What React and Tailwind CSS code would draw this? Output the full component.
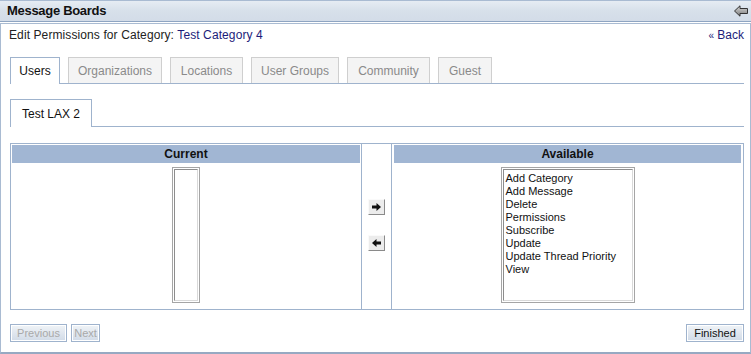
import React from "react";

const tabs = [
  ["Organizations", "w-[94px]"],
  ["Locations", "w-[73px]"],
  ["User Groups", "w-[88px]"],
  ["Community", "w-[83px]"],
  ["Guest", "w-[54px]"],
];
const perms = [
  "Add Category",
  "Add Message",
  "Delete",
  "Permissions",
  "Subscribe",
  "Update",
  "Update Thread Priority",
  "View",
];

function ArrowBtn({ dir }) {
  return (
    <div className="w-[17px] h-[16px] bg-[#ececec] border border-[#fafafa] border-r-[#8a8a8a] border-b-[#8a8a8a] flex items-center justify-center">
      <svg width="9" height="8" viewBox="0 0 9 8">
        {dir === "right" ? (
          <path d="M0 2.5h4.5V0L9 4 4.5 8V5.5H0z" fill="#111" />
        ) : (
          <path d="M9 2.5H4.5V0L0 4l4.5 4V5.5H9z" fill="#111" />
        )}
      </svg>
    </div>
  );
}

function Btn({ children, disabled, w }) {
  return (
    <div className={"h-[18px] border border-[#9fb3cd] bg-white p-px " + w}>
      <div
        className={
          "h-full flex items-center justify-center text-[11px] leading-none bg-gradient-to-b from-[#eef2f6] to-[#d3dce8] " +
          (disabled ? "text-[#a9a9a9]" : "text-[#111]")
        }
      >
        {children}
      </div>
    </div>
  );
}

export default function App() {
  return (
    <div className="w-[751px] h-[354px] bg-white font-['Liberation_Sans',Arial,sans-serif] text-[#222]">
      {/* header */}
      <div className="h-[22px] border-t border-b border-t-[#a9bbd2] border-b-[#8fa5c2] bg-gradient-to-b from-[#e6ecf3] via-[#d7e0ea] to-[#d3dce8] flex items-center justify-between pl-[7px] pr-[3px]">
        <span className="font-bold text-[13px] text-[#111] tracking-[-0.3px]">Message Boards</span>
        <svg width="14" height="12" viewBox="0 0 14 12">
          <defs>
            <linearGradient id="ag" x1="0" y1="0" x2="0" y2="1">
              <stop offset="0" stopColor="#d8d8d8" />
              <stop offset="1" stopColor="#7a7a7a" />
            </linearGradient>
          </defs>
          <path d="M0.5 6L6 0.8V3.5H13.5V8.5H6V11.2Z" fill="url(#ag)" stroke="#333" strokeWidth="1" strokeLinejoin="round" />
        </svg>
      </div>

      {/* frame */}
      <div className="mt-px h-[331px] border border-[#a9bbd2] border-b-2 border-b-[#97a9c2] flex flex-col">
        {/* title row */}
        <div className="h-[18px] flex justify-between pl-[8px] pr-[6px] pt-[4px] text-[12px] leading-[14px]">
          <span className="tracking-[0.1px]">
            Edit Permissions for Category: <span className="text-[#1c1c7a]">Test Category 4</span>
          </span>
          <span className="text-[#1c1c7a]">
            <span className="text-[10px]">«</span> Back
          </span>
        </div>

        {/* main tabs */}
        <div className="mt-[15px] ml-[9px] mr-[6px] h-[27px] border-b border-[#9fb3cd] flex items-end gap-[8px] text-[12px]">
          <div className="w-[50px] h-[27px] -mb-px border border-b-0 border-[#9fb3cd] bg-white flex items-center justify-center text-[#111]">
            Users
          </div>
          {tabs.map(([t, w]) => (
            <div
              key={t}
              className={
                "h-[26px] border border-b-0 border-[#cfcfcf] bg-[#f4f4f4] flex items-center justify-center text-[#8a8a8a] " + w
              }
            >
              {t}
            </div>
          ))}
        </div>

        {/* sub tab */}
        <div className="mt-[15px] ml-[9px] mr-[6px] h-[28px] border-b border-[#9fb3cd] flex items-end text-[12px]">
          <div className="w-[82px] h-[28px] -mb-px border border-b-0 border-[#9fb3cd] bg-white flex items-center justify-center text-[#111]">
            Test LAX 2
          </div>
        </div>

        {/* table */}
        <div className="mt-[16px] ml-[9px] mr-[6px] h-[167px] border border-[#9fb3cd] flex">
          <div className="w-[350px] p-px flex flex-col items-center">
            <div className="w-full h-[18px] bg-[#a1b6d3] flex items-center justify-center font-bold text-[12px] text-[#111]">
              Current
            </div>
            <div className="mt-[4px] w-[28px] h-[136px] border border-[#a5a5a5] p-px bg-white">
              <div className="w-full h-full border border-[#8d8d8d] border-r-[#d9d9d9] border-b-[#d9d9d9]" />
            </div>
          </div>
          <div className="w-[31px] border-l border-r border-[#9fb3cd] flex flex-col items-center justify-center gap-[20px] pb-[3px]">
            <ArrowBtn dir="right" />
            <ArrowBtn dir="left" />
          </div>
          <div className="flex-1 p-[2px] pt-px flex flex-col items-center">
            <div className="w-full h-[18px] bg-[#a1b6d3] flex items-center justify-center font-bold text-[12px] text-[#111]">
              Available
            </div>
            <div className="mt-[4px] w-[134px] h-[136px] border border-[#a5a5a5] p-px bg-white">
              <div className="w-full h-full border border-[#8d8d8d] border-r-[#d9d9d9] border-b-[#d9d9d9] pl-[2px] pt-[2px] text-[11px] leading-[13px] text-[#111]">
                {perms.map((p) => (
                  <div key={p}>{p}</div>
                ))}
              </div>
            </div>
          </div>
        </div>

        {/* buttons */}
        <div className="mt-[14px] ml-[9px] mr-[6px] flex items-center">
          <div className="flex gap-[4px]">
            <Btn disabled w="w-[57px]">Previous</Btn>
            <Btn disabled w="w-[29px]">Next</Btn>
          </div>
          <div className="ml-auto">
            <Btn w="w-[58px]">Finished</Btn>
          </div>
        </div>
      </div>
    </div>
  );
}
